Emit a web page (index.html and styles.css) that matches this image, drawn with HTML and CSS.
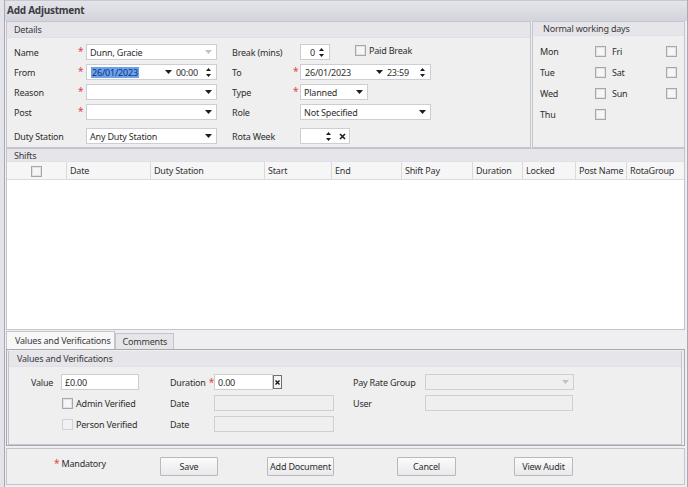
FILE: index.html
```html
<!DOCTYPE html>
<html>
<head>
<meta charset="utf-8">
<title>Add Adjustment</title>
<link rel="stylesheet" href="styles.css">
</head>
<body>
<div class="win">
  <div class="titlebar">Add Adjustment</div>
  <div class="content">
    <div class="toprow">
      <section class="panel details">
        <div class="phead">Details</div>
        <div class="dgrid">
          <span class="lbl">Name</span><span class="req">*</span>
          <div class="field combo"><span>Dunn, Gracie</span><svg class="arr dim" width="7" height="4" viewBox="0 0 7 4"><path d="M0 0H7L3.5 4Z"/></svg></div>
          <span></span><span class="lbl">Break (mins)</span><span></span>
          <div class="cellrow">
            <div class="field spin w30"><span class="pl7">0</span><svg class="sp" width="7" height="11" viewBox="0 0 7 11"><path d="M3.5 1L6 4H1Z M1 7H6L3.5 10Z"/></svg></div>
            <label class="cb paid"><span class="box"></span>Paid Break</label>
          </div>

          <span class="lbl">From</span><span class="req">*</span>
          <div class="field dt">
            <span class="sel">26/01/2023</span>
            <svg class="arr a1" width="7" height="4" viewBox="0 0 7 4"><path d="M0 0H7L3.5 4Z"/></svg>
            <span class="time">00:00</span>
            <svg class="sp" width="7" height="11" viewBox="0 0 7 11"><path d="M3.5 1L6 4H1Z M1 7H6L3.5 10Z"/></svg>
          </div>
          <span></span><span class="lbl">To</span><span class="req r2">*</span>
          <div class="field dt w131">
            <span class="dtxt">26/01/2023</span>
            <svg class="arr a2" width="7" height="4" viewBox="0 0 7 4"><path d="M0 0H7L3.5 4Z"/></svg>
            <span class="time t2">23:59</span>
            <svg class="sp" width="7" height="11" viewBox="0 0 7 11"><path d="M3.5 1L6 4H1Z M1 7H6L3.5 10Z"/></svg>
          </div>

          <span class="lbl">Reason</span><span class="req">*</span>
          <div class="field combo"><span></span><svg class="arr" width="7" height="4" viewBox="0 0 7 4"><path d="M0 0H7L3.5 4Z"/></svg></div>
          <span></span><span class="lbl">Type</span><span class="req r2">*</span>
          <div class="cellrow"><div class="field combo w68"><span>Planned</span><svg class="arr" width="7" height="4" viewBox="0 0 7 4"><path d="M0 0H7L3.5 4Z"/></svg></div></div>

          <span class="lbl">Post</span><span class="req">*</span>
          <div class="field combo"><span></span><svg class="arr" width="7" height="4" viewBox="0 0 7 4"><path d="M0 0H7L3.5 4Z"/></svg></div>
          <span></span><span class="lbl">Role</span><span></span>
          <div class="cellrow"><div class="field combo w131"><span>Not Specified</span><svg class="arr" width="7" height="4" viewBox="0 0 7 4"><path d="M0 0H7L3.5 4Z"/></svg></div></div>

          <span class="lbl last">Duty Station</span><span></span>
          <div class="field combo last"><span>Any Duty Station</span><svg class="arr" width="7" height="4" viewBox="0 0 7 4"><path d="M0 0H7L3.5 4Z"/></svg></div>
          <span></span><span class="lbl last">Rota Week</span><span></span>
          <div class="cellrow last">
            <div class="field rota"><svg class="sp" width="7" height="11" viewBox="0 0 7 11"><path d="M3.5 1L6 4H1Z M1 7H6L3.5 10Z"/></svg><svg class="xic" width="7" height="7" viewBox="0 0 7 7"><path d="M1 1L6 6M6 1L1 6"/></svg></div>
          </div>
        </div>
      </section>
      <section class="panel nwd">
        <div class="phead nh">Normal working days</div>
        <div class="ngrid">
          <span>Mon</span><span class="box"></span><span class="d2">Fri</span><span class="box"></span>
          <span>Tue</span><span class="box"></span><span class="d2">Sat</span><span class="box"></span>
          <span>Wed</span><span class="box"></span><span class="d2">Sun</span><span class="box"></span>
          <span>Thu</span><span class="box"></span><span></span><span></span>
        </div>
      </section>
    </div>

    <section class="panel shifts">
      <div class="phead sh">Shifts</div>
      <div class="ghead">
        <div class="gc c0"><span class="box"></span></div>
        <div class="gc c1">Date</div>
        <div class="gc c2">Duty Station</div>
        <div class="gc c3">Start</div>
        <div class="gc c4">End</div>
        <div class="gc c5">Shift Pay</div>
        <div class="gc c6">Duration</div>
        <div class="gc c7">Locked</div>
        <div class="gc c8">Post Name</div>
        <div class="gc c9">RotaGroup</div>
      </div>
      <div class="gbody"></div>
    </section>

    <div class="tabs">
      <div class="tab active">Values and Verifications</div>
      <div class="tab">Comments</div>
    </div>
    <div class="tabpage">
      <div class="group">
        <div class="phead gh">Values and Verifications</div>
        <div class="vgrid">
          <span class="lbl">Value</span>
          <div><div class="field w78"><span>£0.00</span></div></div>
          <span class="lbl dur">Duration <span class="req">*</span></span>
          <div class="cellrow"><div class="field w59"><span>0.00</span></div><span class="xbtn"><svg width="5" height="5" viewBox="0 0 5 5"><path d="M0.5 0.5L4.5 4.5M4.5 0.5L0.5 4.5"/></svg></span></div>
          <span class="lbl">Pay Rate Group</span>
          <div class="field combo dis w149"><span></span><svg class="arr dim" width="7" height="4" viewBox="0 0 7 4"><path d="M0 0H7L3.5 4Z"/></svg></div>

          <span></span>
          <label class="cb ver"><span class="box"></span>Admin Verified</label>
          <span class="lbl">Date</span>
          <div class="field dis w120"></div>
          <span class="lbl">User</span>
          <div class="field dis w148"></div>

          <span></span>
          <label class="cb ver"><span class="box off"></span>Person Verified</label>
          <span class="lbl">Date</span>
          <div class="field dis w120"></div>
          <span></span><span></span>
        </div>
      </div>
    </div>

    <div class="footer">
      <span class="mand"><span class="req">*</span> Mandatory</span>
      <button class="btn b1">Save</button>
      <button class="btn b2">Add Document</button>
      <button class="btn b3">Cancel</button>
      <button class="btn b3">View Audit</button>
    </div>
  </div>
</div>
</body>
</html>
```

FILE: styles.css
```css
* { box-sizing: border-box; }
html, body { margin: 0; padding: 0; }
body {
  width: 688px; height: 487px; overflow: hidden;
  background: #e3e3e9;
  font-family: "Noto Sans", "DejaVu Sans", sans-serif;
  font-size: 9px; letter-spacing: -0.2px; color: #2e2e2e;
}
.win {
  margin-left: 4px; width: 684px; height: 487px;
  border-left: 1px solid #a8a8b6; border-right: 1px solid #a8a8b6;
  background: #efeff1;
  display: flex; flex-direction: column;
}
.titlebar {
  height: 21px; flex: none;
  background: linear-gradient(#e4e4ea, #d3d3db);
  border-top: 1px solid #c8c8d0;
  font-weight: bold; font-size: 10px; letter-spacing: -0.25px; color: #3c3c46;
  padding-left: 2px; line-height: 19px;
}
.content { padding: 0 2px 0 1px; display: flex; flex-direction: column; flex: 1; }
.toprow { display: flex; gap: 1px; height: 127px; flex: none; }
.panel { border: 1px solid #c4c4cb; background: #efefef; }
.phead {
  height: 16px; background: #e5e5ea; line-height: 16px; white-space: nowrap;
  padding-left: 7px; color: #3a3a3a; border-bottom: 1px solid #e0e0e6;
}
.details { width: 525px; }
.nwd { flex: 1; }
.nh { height: 14px; line-height: 14px; padding-left: 10px; }

.dgrid {
  display: grid;
  grid-template-columns: 64px 8px 131px 15px 62px 6px 1fr;
  grid-template-rows: 16px 16px 16px 16px 20px; row-gap: 4px;
  padding: 6px 0 0 7px;
}
.lbl { display: flex; align-items: center; white-space: nowrap; }
.req { color: #e0484a; font-size: 10px; line-height: 10px; align-self: start; padding-top: 2px; }
.r2 { margin-left: -1px; }
.last { align-self: end; height: 16px; }
.cellrow { display: flex; align-items: center; }

.field {
  height: 16px; background: #fff; border: 1px solid #cdcdd3;
  display: flex; align-items: center; padding: 0 3px; white-space: nowrap;
}
.combo { justify-content: space-between; padding-right: 4px; }
.arr { fill: #1e1e1e; flex: none; }
.arr.dim { fill: #c2c2c2; }
.sp { fill: #1e1e1e; flex: none; }
.w30 { width: 30px; justify-content: space-between; padding-right: 4px; }
.pl7 { padding-left: 6px; }
.w68 { width: 68px; }
.w131 { width: 131px; }
.dt { padding-right: 4px; }
.sel { background: #6aa3ec; color: #0f2f78; padding: 0 1px; margin-left: 1px; line-height: 11px; }
.a1 { margin-left: 26px; }
.time { margin-left: 4px; flex: 1; }
.dtxt { margin-left: 1px; }
.a2 { margin-left: 25px; }
.t2 { margin-left: 4px; }
.rota { width: 50px; justify-content: flex-end; padding-right: 3px; gap: 7px; }
.xic { stroke: #1e1e1e; stroke-width: 1.6; fill: none; }

.cb { display: flex; align-items: center; gap: 3px; color: #2e2e2e; white-space: nowrap; }
.paid { margin-left: 25px; margin-top: -3px; }
.box {
  display: inline-block; width: 11px; height: 11px; flex: none;
  border: 1px solid #a6a6ab; background: #f6f6f6;
  box-shadow: inset 0 0 0 1px #e2e2e2;
}
.box.off { border-color: #d2d2d6; box-shadow: none; background: #f1f1f1; }

.ngrid {
  display: grid;
  grid-template-columns: 55px 11px 6px 54px 11px;
  grid-auto-rows: 21px;
  padding: 5px 0 0 7px;
  align-items: center;
}
.ngrid span:nth-child(4n+3) { grid-column: 4; }
.ngrid span:nth-child(4n+4) { grid-column: 5; }

.shifts { height: 182px; flex: none; display: flex; flex-direction: column; }
.sh { height: 13px; line-height: 13px; }
.ghead {
  display: flex; height: 18px; background: #f6f6f6;
  border-bottom: 1px solid #dcdce0; flex: none;
}
.gc {
  border-right: 1px solid #dadade; padding-left: 3px; white-space: nowrap; overflow: hidden;
  display: flex; align-items: center; color: #333;
}
.gc.c0 { width: 60px; justify-content: center; padding-left: 0; padding-top: 1px; }
.c1 { width: 84px; } .c2 { width: 114px; } .c3 { width: 67px; } .c4 { width: 70px; }
.c5 { width: 71px; } .c6 { width: 50px; } .c7 { width: 53px; } .c8 { width: 51px; }
.c9 { flex: 1; border-right: none; }
.gbody { flex: 1; background: #fff; }

.tabs { height: 19px; flex: none; display: flex; align-items: flex-end; padding-top: 1px; }
.tab {
  border: 1px solid #c4c4cb; border-bottom: none; background: #e6e6e8; white-space: nowrap;
  height: 16px; line-height: 15px; padding: 0 6px 0 7px; color: #3a3a3a;
}
.tab.active { background: #f7f7f7; height: 18px; line-height: 17px; padding: 0 3px 0 8px; }
.tabpage { height: 97px; flex: none; border: 1px solid #a9a9b4; padding: 1px 2px 0 1px; background: #efefef; }
.group { border: 1px solid #c4c4cb; border-top: none; height: 100%; }
.gh { padding-left: 8px; }
.vgrid {
  display: grid;
  grid-template-columns: 30px 109px 44px 139px 72px 149px;
  grid-auto-rows: 16px; row-gap: 5px;
  padding: 7px 0 0 22px;
}
.dur { gap: 3px; }
.dur .req { padding-top: 0; align-self: center; }
.w78 { width: 78px; }
.w59 { width: 59px; }
.w120 { width: 120px; }
.w148 { width: 148px; }
.w149 { width: 149px; }
.dis { background: #efefef; border-color: #cfcfd3; }
.xbtn {
  width: 9px; height: 14px; border: 1px solid #707070; background: #f4f4f4;
  display: flex; align-items: center; justify-content: center;
}
.xbtn svg { stroke: #111; stroke-width: 1.3; }
.ver { margin-left: 1px; }

.footer {
  margin-top: 2px; height: 37px; flex: none;
  border: 1px solid #c4c4cb; background: #efefef;
  display: grid; grid-template-columns: 153px 107px 130px 117px 59px;
  align-items: center;
}
.mand { padding-left: 47px; margin-top: -6px; white-space: nowrap; }
.mand .req { align-self: auto; padding: 0; }
.btn {
  height: 19px; border: 1px solid #b8b8be; border-radius: 1px; white-space: nowrap;
  background: linear-gradient(#fbfbfb, #e9e9ec);
  font-family: inherit; font-size: 9px; letter-spacing: -0.2px; color: #2e2e2e; padding: 0;
}
.b1 { width: 58px; }
.b2 { width: 67px; }
.b3 { width: 59px; }
```
